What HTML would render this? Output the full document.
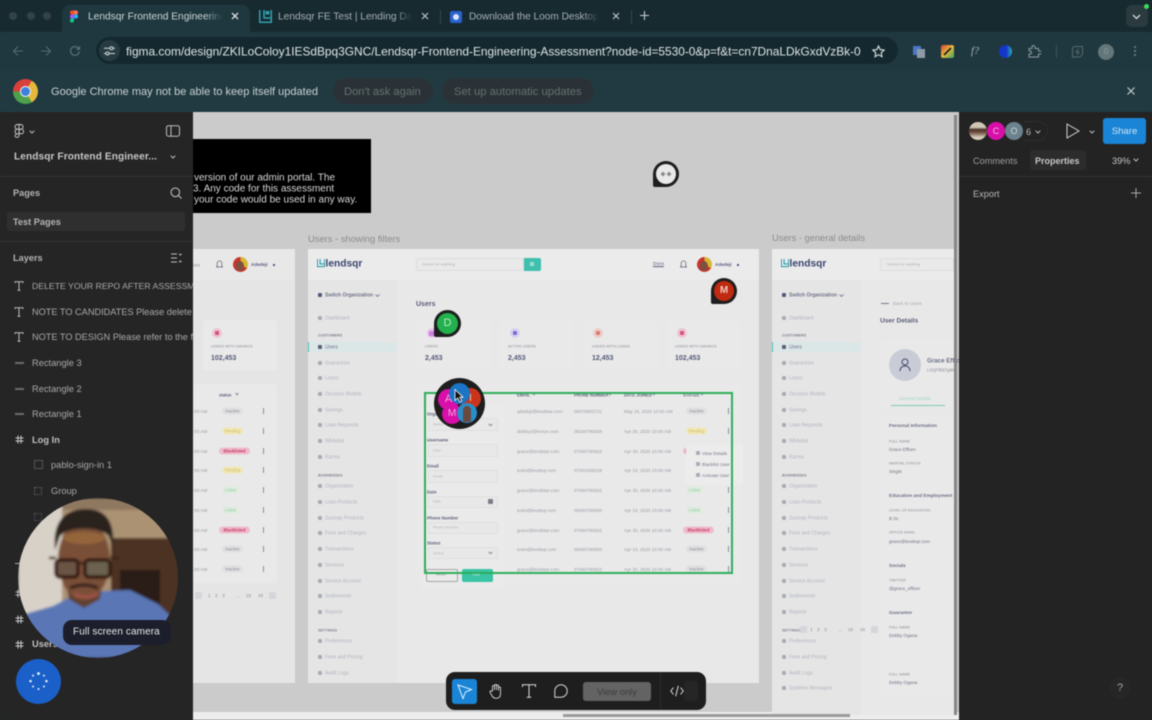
<!DOCTYPE html>
<html><head><meta charset="utf-8"><title>Lendsqr Frontend Engineering</title>
<style>
*{box-sizing:border-box}
html,body{margin:0;padding:0;width:1152px;height:720px;overflow:hidden;background:#1b2f35}
body{font-family:"Liberation Sans",sans-serif}
#r{position:absolute;left:0;top:0;width:1152px;height:720px;overflow:hidden;filter:blur(.5px)}
#r div,#r svg{position:absolute}
.t{white-space:nowrap;line-height:1;transform:translateY(calc(-50% + 1.6px))}
.f{background:#e5e5e5}
.m{background:#e8e8e8}
.s{font-size:5px;color:#b2b5bf;white-space:nowrap;line-height:1;transform:translateY(calc(-50% + 2px));left:17px}
.i{left:10px;width:4px;height:4px;background:#a9acb8;border-radius:1px;transform:translateY(-50%)}
.h{font-size:3.8px;color:#80838f;font-weight:bold;left:10px;white-space:nowrap;line-height:1;transform:translateY(calc(-50% + 1.5px))}
.c{background:#e9e9e9;border-radius:2px}
.lb{font-size:3.8px;color:#8a8d98;white-space:nowrap;line-height:1;transform:translateY(calc(-50% + 1.5px))}
.n{font-size:7px;font-weight:bold;color:#55597a;white-space:nowrap;line-height:1;transform:translateY(calc(-50% + 1.5px))}
.q{font-size:4.6px;color:#9a9da6;white-space:nowrap;line-height:1;transform:translateY(calc(-50% + 1.5px))}
.p{height:7px;border-radius:4px;font-size:4.2px;line-height:7px;text-align:center;transform:translateY(-50%)}
.ia{background:#e0e0e2;color:#8d8f96;width:21px}
.pe{background:#f0e7b8;color:#d0bb5c;width:21px}
.bl{background:#efbccb;color:#c63a68;width:31px;font-weight:bold}
.ac{background:#e0ebe0;color:#8fce9c;width:17px}
.k{width:1.4px;height:6px;background:#8a8c9a;transform:translateY(-50%)}
.in{background:#e8e8e8;border:.6px solid #dfdfdf;border-radius:1px;left:428px;width:70px}
.bold{color:#5c5f78;font-weight:bold}
.v{font-size:4.8px;color:#6c6f83;font-weight:bold;white-space:nowrap;line-height:1;transform:translateY(calc(-50% + 1.5px));left:889px}
.tri{width:0;height:0;border-left:2px solid transparent;border-right:2px solid transparent;border-top:3px solid #a0a2ac}
.fade{-webkit-mask-image:linear-gradient(90deg,#000 88%,transparent);mask-image:linear-gradient(90deg,#000 88%,transparent)}
.lt{font-size:9.1px;color:#a9a9a9;left:18px}
.av{border-radius:50%;background:conic-gradient(#d9b82f 0 120deg,#c9342f 120deg 360deg)}
.av2{border-radius:50%;background:#7d5040}
</style></head><body><div id="r">

<!-- chrome -->
<div style="left:0;top:0;width:1152px;height:32px;background:#172a30"></div>
<div style="left:0;top:32px;width:1152px;height:40px;background:#1f383f"></div>
<div style="left:0;top:71px;width:1152px;height:41px;background:#213a41"></div>
<div style="left:9px;top:12px;width:8px;height:8px;border-radius:50%;background:#334347"></div>
<div style="left:27px;top:12px;width:8px;height:8px;border-radius:50%;background:#334347"></div>
<div style="left:43px;top:12px;width:8px;height:8px;border-radius:50%;background:#334347"></div>
<div style="left:62px;top:5px;width:188px;height:28px;background:#1f383f;border-radius:8px 8px 0 0"></div>

<svg style="left:70px;top:10px" width="8" height="13" viewBox="0 0 8 12"><path d="M0 2a2 2 0 0 1 2-2h2v4H2a2 2 0 0 1-2-2z" fill="#f24e1e"/><path d="M4 0h2a2 2 0 0 1 0 4H4z" fill="#ff7262"/><path d="M0 6a2 2 0 0 1 2-2h2v4H2a2 2 0 0 1-2-2z" fill="#a259ff"/><circle cx="6" cy="6" r="2" fill="#1abcfe"/><path d="M0 10a2 2 0 0 1 2-2h2v2a2 2 0 0 1-4 0z" fill="#0acf83"/></svg>
<div class="t fade" style="left:88px;top:16px;width:134px;overflow:hidden;font-size:10.2px;color:#ccd5d6;line-height:12px">Lendsqr Frontend Engineering</div>
<svg style="left:231px;top:12px" width="8" height="8" viewBox="0 0 8 8"><path d="M1 1l6 6M7 1L1 7" stroke="#d8dfe0" stroke-width="1.3"/></svg>
<svg style="left:259px;top:10px" width="13" height="13" viewBox="0 0 13 13"><path d="M.7 0v12.3h11.6V0M5 0v8h7" fill="none" stroke="#2f9fab" stroke-width="1.6"/><rect x="6.5" y="1" width="4" height="3.5" fill="#2f9fab"/></svg>
<div class="t fade" style="left:278px;top:16px;width:134px;overflow:hidden;font-size:10.2px;color:#a5b1b3;line-height:12px">Lendsqr FE Test | Lending Dashboard</div>
<svg style="left:421px;top:12px" width="8" height="8" viewBox="0 0 8 8"><path d="M1 1l6 6M7 1L1 7" stroke="#c0c8c9" stroke-width="1.2"/></svg>
<div style="left:440px;top:10px;width:1px;height:14px;background:#33464b"></div>
<div style="left:450px;top:11px;width:12px;height:12px;background:#2a62d0;border-radius:2px"></div>
<div style="left:453px;top:14px;width:6px;height:6px;background:#d9e4f7;border-radius:50%"></div>
<div class="t fade" style="left:469px;top:16px;width:130px;overflow:hidden;font-size:10.1px;color:#a5b1b3;line-height:12px">Download the Loom Desktop</div>
<svg style="left:612px;top:12px" width="8" height="8" viewBox="0 0 8 8"><path d="M1 1l6 6M7 1L1 7" stroke="#c0c8c9" stroke-width="1.2"/></svg>
<div style="left:631px;top:10px;width:1px;height:14px;background:#33464b"></div>
<svg style="left:640px;top:11px" width="9" height="9" viewBox="0 0 9 9"><path d="M4.5 0v9M0 4.5h9" stroke="#c5cdce" stroke-width="1.1"/></svg>
<div style="left:1126px;top:5px;width:22px;height:22px;background:#2a3a3e;border-radius:6px"></div>
<svg style="left:1132px;top:14px" width="9" height="6" viewBox="0 0 9 6"><path d="M1 1l3.5 3.5L8 1" fill="none" stroke="#d5dcdd" stroke-width="1.3"/></svg>
<div style="left:1144px;top:4px;width:5px;height:5px;background:#3ddc5a;border-radius:50%"></div>

<svg style="left:12px;top:45px" width="12" height="12" viewBox="0 0 12 12"><path d="M11 6H1.5M6 1.5L1.5 6 6 10.5" fill="none" stroke="#51686d" stroke-width="1.1"/></svg>
<svg style="left:40px;top:45px" width="12" height="12" viewBox="0 0 12 12"><path d="M1 6h9.5M6 1.5L10.5 6 6 10.5" fill="none" stroke="#51686d" stroke-width="1.1"/></svg>
<svg style="left:69px;top:45px" width="12" height="12" viewBox="0 0 12 12"><path d="M10.3 6.5A4.4 4.4 0 1 1 9 2.8L10.5 4.2M10.5 1v3.2H7.3" fill="none" stroke="#5d7479" stroke-width="1.1"/></svg>
<div style="left:96px;top:37px;width:802px;height:27px;background:#14292f;border-radius:14px"></div>
<div style="left:99px;top:40px;width:21px;height:21px;background:#263c42;border-radius:50%"></div>
<svg style="left:104px;top:46px" width="11" height="10" viewBox="0 0 11 10"><path d="M0 2.2h6M9 2.2h2M0 7.5h2M5 7.5h6" stroke="#cdd6d7" stroke-width="1"/><circle cx="7.5" cy="2.2" r="1.5" fill="none" stroke="#cdd6d7"/><circle cx="3.5" cy="7.5" r="1.5" fill="none" stroke="#cdd6d7"/></svg>
<div class="t" style="left:126px;top:50px;font-size:11.9px;color:#dfe5e6;width:738px;overflow:hidden;line-height:14px">figma.com/design/ZKILoColoy1IESdBpq3GNC/Lendsqr-Frontend-Engineering-Assessment?node-id=5530-0&amp;p=f&amp;t=cn7DnaLDkGxdVzBk-0</div>
<svg style="left:872px;top:45px" width="13" height="13" viewBox="0 0 13 13"><path d="M6.5 1l1.7 3.6 3.9.5-2.9 2.7.8 3.9-3.5-2-3.5 2 .8-3.9L.9 5.1l3.9-.5z" fill="none" stroke="#dfe5e6" stroke-width="1.1"/></svg>
<div style="left:913px;top:46px;width:8px;height:9px;background:#4a78c4"></div><div style="left:917px;top:49px;width:8px;height:9px;background:#8e9aa8"></div>
<div style="left:941px;top:45px;width:13px;height:13px;border-radius:2px;background:linear-gradient(135deg,#d9443a,#e6b93a 50%,#3aa864)"></div>
<svg style="left:942px;top:46px" width="11" height="11"><path d="M2 9L9 2" stroke="#1a1a1a" stroke-width="1.6"/></svg>
<div class="t" style="left:971px;top:50px;font:italic 10.5px 'Liberation Serif',serif;color:#a9b3b5">f?</div>
<div style="left:999px;top:45px;width:13px;height:13px;border-radius:50%;background:linear-gradient(90deg,#1436c9 55%,#2fa7b8)"></div>
<svg style="left:1028px;top:45px" width="13" height="13" viewBox="0 0 13 13"><path d="M1 3.5h3V2a1.5 1.5 0 0 1 3 0v1.5h3.5V6H12a1.5 1.5 0 0 1 0 3h-1.500v3H1V9h1a1.500 1.500 0 0 0 0-3H1z" fill="none" stroke="#8c9a9c" stroke-width="1"/></svg>
<div style="left:1056px;top:45px;width:1px;height:13px;background:#3c5055"></div>
<svg style="left:1071px;top:45px" width="13" height="13" viewBox="0 0 13 13"><path d="M3 1.5h8.5V8a4 4 0 0 1-4 4H1.5V5.5a4 4 0 0 1 1.5-4zM7.5 3.5L5 7h3l-2 3" fill="none" stroke="#56696d" stroke-width="1"/></svg>
<div style="left:1098px;top:44px;width:16px;height:16px;border-radius:50%;background:#63767a;color:#8ea0a3;font-size:8px;line-height:16px;text-align:center">0</div>
<div style="left:1134px;top:46px;width:2px;height:2px;background:#76888b;border-radius:50%"></div><div style="left:1134px;top:50px;width:2px;height:2px;background:#76888b;border-radius:50%"></div><div style="left:1134px;top:54px;width:2px;height:2px;background:#76888b;border-radius:50%"></div>

<div style="left:13px;top:79px;width:25px;height:25px;border-radius:50%;background:conic-gradient(from 30deg,#e6b83a 0 120deg,#4fa04b 120deg 240deg,#d9403a 240deg 360deg)"></div>
<div style="left:20px;top:86px;width:11px;height:11px;border-radius:50%;background:#3f7fdc;border:1.5px solid #e8eef5"></div>
<div class="t" style="left:51px;top:90.500px;font-size:11.02px;color:#c9d2d3">Google Chrome may not be able to keep itself updated</div>
<div style="left:333px;top:78px;width:100px;height:26px;border-radius:13px;background:#2a3237"></div>
<div class="t" style="left:344px;top:90.500px;font-size:11.2px;color:#66716f">Don't ask again</div>
<div style="left:442px;top:78px;width:152px;height:26px;border-radius:13px;background:#2a3237"></div>
<div class="t" style="left:454px;top:90.500px;font-size:11.25px;color:#66716f">Set up automatic updates</div>
<svg style="left:1127px;top:87px" width="8" height="8" viewBox="0 0 8 8"><path d="M.5.5l7 7M7.5.5l-7 7" stroke="#c9d2d3" stroke-width="1.1"/></svg>

<!-- canvas -->
<div style="left:193px;top:112px;width:766px;height:608px;background:#cbcbcb"></div>
<div style="left:193px;top:712px;width:766px;height:8px;background:#ededed"></div>

<div style="left:0;top:0;width:1152px;height:720px;filter:blur(.25px)">
<!-- left frame -->
<div class="f" style="left:193px;top:249px;width:102px;height:434px"></div>
<div class="m" style="left:193px;top:249px;width:102px;height:31px"></div>
<div class="lb" style="left:193px;top:264px;font-size:4.5px">ocs</div>
<svg style="left:216px;top:260px" width="7" height="9" viewBox="0 0 7 9"><path d="M3.5.8A2.4 2.4 0 0 0 1.2 3.3V6L.4 7h6.2l-.8-1V3.3A2.4 2.4 0 0 0 3.5.8z" fill="none" stroke="#5a5d70" stroke-width=".7"/></svg>
<div class="av" style="left:233px;top:257px;width:15px;height:15px"></div><div class="av2" style="left:236px;top:261px;width:8px;height:10px"></div>
<div class="lb" style="left:251px;top:264px;font-size:4.6px;color:#5c5f80;font-weight:bold">Adedeji</div>
<div style="left:273px;top:264px;width:2px;height:1.5px;background:#55587a"></div>
<div class="c" style="left:203px;top:320px;width:74px;height:50px"></div>
<div style="left:212px;top:328px;width:10px;height:10px;border-radius:50%;background:#ebc6d2"></div><div style="left:215px;top:331px;width:4px;height:4px;background:#d9537e"></div>
<div class="lb" style="left:211px;top:346px">USERS WITH SAVINGS</div>
<div class="n" style="left:211px;top:357px">102,453</div>
<div class="c" style="left:193px;top:384px;width:84px;height:199px"></div>
<div class="lb bold" style="left:219px;top:394px;font-size:4.2px">status</div><div class="tri" style="left:235px;top:393px"></div>
<div class="q" style="left:193px;top:411px">:00 AM</div><div class="p ia" style="left:222px;top:411px">Inactive</div><div class="k" style="left:263px;top:411px"></div>
<div class="q" style="left:193px;top:431px">:00 AM</div><div class="p pe" style="left:222px;top:431px">Pending</div><div class="k" style="left:263px;top:431px"></div>
<div class="q" style="left:193px;top:451px">:00 AM</div><div class="p bl" style="left:219px;top:451px">Blacklisted</div><div class="k" style="left:263px;top:451px"></div>
<div class="q" style="left:193px;top:470px">:00 AM</div><div class="p pe" style="left:222px;top:470px">Pending</div><div class="k" style="left:263px;top:470px"></div>
<div class="q" style="left:193px;top:490px">:00 AM</div><div class="p ac" style="left:222px;top:490px">Active</div><div class="k" style="left:263px;top:490px"></div>
<div class="q" style="left:193px;top:510px">:00 AM</div><div class="p ac" style="left:222px;top:510px">Active</div><div class="k" style="left:263px;top:510px"></div>
<div class="q" style="left:193px;top:530px">:00 AM</div><div class="p bl" style="left:219px;top:530px">Blacklisted</div><div class="k" style="left:263px;top:530px"></div>
<div class="q" style="left:193px;top:549px">:00 AM</div><div class="p ia" style="left:222px;top:549px">Inactive</div><div class="k" style="left:263px;top:549px"></div>
<div class="q" style="left:193px;top:569px">:00 AM</div><div class="p ia" style="left:222px;top:569px">Inactive</div><div class="k" style="left:263px;top:569px"></div>
<div style="left:195px;top:592px;width:7px;height:7px;background:#d5d6da;border-radius:1px"></div>
<div class="lb" style="left:208px;top:595px;font-size:4.6px;letter-spacing:4.6px">123</div><div class="lb" style="left:236px;top:595px;font-size:4.6px">...</div><div class="lb" style="left:246px;top:595px;font-size:4.6px">15</div><div class="lb" style="left:258px;top:595px;font-size:4.6px">16</div>
<div style="left:269px;top:592px;width:7px;height:7px;background:#d5d6da;border-radius:1px"></div>

<div class="t" style="left:308px;top:237px;font-size:9.4px;color:#8c8c8c">Users - showing filters</div>
<div class="t" style="left:772px;top:237px;font-size:9.3px;color:#8c8c8c">Users - general details</div>

<!-- frame 2 -->
<div class="m" style="left:308px;top:249px;width:451px;height:434px"></div>
<div class="f" style="left:308px;top:280px;width:89px;height:403px"></div>
<div style="left:308px;top:249px;width:451px;height:31px;background:#ebebeb"></div>
<svg style="left:317px;top:258px" width="8" height="10" viewBox="0 0 13 13"><path d="M.7 0v12.3h11.6V0M5 0v8h7" fill="none" stroke="#2f9fab" stroke-width="1.800"/></svg>
<div class="t" style="left:325.500px;top:262.500px;font-size:10.2px;font-weight:bold;color:#3c4570">lendsqr</div>
<div style="left:416px;top:258px;width:108px;height:13px;background:#e9e9e9;border:.6px solid #dedede;border-radius:2px 0 0 2px"></div>
<div class="lb" style="left:422px;top:264px;color:#aeb0b8">Search for anything</div>
<div style="left:524px;top:258px;width:17px;height:13px;background:#3fc0ae;border-radius:0 2px 2px 0"></div>
<div style="left:530px;top:262px;width:4px;height:4px;border:.6px solid #d5f0ec;border-radius:50%"></div>
<div class="lb" style="left:653px;top:264px;font-size:4.8px;color:#5c6080;text-decoration:underline">Docs</div>
<svg style="left:680px;top:260px" width="7" height="9" viewBox="0 0 7 9"><path d="M3.5.8A2.4 2.4 0 0 0 1.2 3.3V6L.4 7h6.2l-.8-1V3.3A2.4 2.4 0 0 0 3.5.8z" fill="none" stroke="#5a5d70" stroke-width=".7"/></svg>
<div class="av" style="left:697px;top:257px;width:15px;height:15px"></div><div class="av2" style="left:700px;top:261px;width:8px;height:10px"></div>
<div class="lb" style="left:715px;top:264px;font-size:4.6px;color:#5c5f80;font-weight:bold">Adedeji</div>
<div style="left:737px;top:264px;width:2px;height:1.5px;background:#55587a"></div>

<!-- sidebar frame 2 -->
<div style="left:308px;top:0;width:89px;height:720px">
<div style="left:0;top:342px;width:89px;height:10px;background:#dbe7e6;border-left:1px solid #55bfb4"></div>
<div class="i" style="top:295px;background:#55587a"></div><div class="s" style="top:294px;color:#6f7288;font-weight:bold">Switch Organization</div>
<svg style="left:67px;top:294px" width="5" height="3" viewBox="0 0 5 3"><path d="M.5.500l2 2 2-2" fill="none" stroke="#55587a" stroke-width=".7"/></svg>
<div class="i" style="top:318px"></div><div class="s" style="top:317px">Dashboard</div>
<div class="h" style="top:335px">CUSTOMERS</div>
<div class="i" style="top:347px;background:#5c5f78"></div><div class="s" style="top:346px;color:#6c6f88">Users</div>
<div class="i" style="top:363px"></div><div class="s" style="top:362px">Guarantors</div>
<div class="i" style="top:378px"></div><div class="s" style="top:377px">Loans</div>
<div class="i" style="top:394px"></div><div class="s" style="top:393px">Decision Models</div>
<div class="i" style="top:410px"></div><div class="s" style="top:409px">Savings</div>
<div class="i" style="top:425px"></div><div class="s" style="top:424px">Loan Requests</div>
<div class="i" style="top:441px"></div><div class="s" style="top:440px">Whitelist</div>
<div class="i" style="top:457px"></div><div class="s" style="top:456px">Karma</div>
<div class="h" style="top:475px">BUSINESSES</div>
<div class="i" style="top:486px"></div><div class="s" style="top:485px">Organization</div>
<div class="i" style="top:502px"></div><div class="s" style="top:501px">Loan Products</div>
<div class="i" style="top:518px"></div><div class="s" style="top:517px">Savings Products</div>
<div class="i" style="top:533px"></div><div class="s" style="top:532px">Fees and Charges</div>
<div class="i" style="top:549px"></div><div class="s" style="top:548px">Transactions</div>
<div class="i" style="top:565px"></div><div class="s" style="top:564px">Services</div>
<div class="i" style="top:581px"></div><div class="s" style="top:580px">Service Account</div>
<div class="i" style="top:596px"></div><div class="s" style="top:595px">Settlements</div>
<div class="i" style="top:612px"></div><div class="s" style="top:611px">Reports</div>
<div class="h" style="top:630px">SETTINGS</div>
<div class="i" style="top:641px"></div><div class="s" style="top:640px">Preferences</div>
<div class="i" style="top:657px"></div><div class="s" style="top:656px">Fees and Pricing</div>
<div class="i" style="top:673px"></div><div class="s" style="top:672px">Audit Logs</div>
</div>

<!-- frame 2 main -->
<div class="t" style="left:416px;top:302.500px;font-size:7px;font-weight:bold;color:#5a5d7a">Users</div>
<div class="c" style="left:416px;top:320px;width:75px;height:50px"></div>
<div class="c" style="left:500px;top:320px;width:74px;height:50px"></div>
<div class="c" style="left:583px;top:320px;width:75px;height:50px"></div>
<div class="c" style="left:667px;top:320px;width:73px;height:50px"></div>
<div style="left:427px;top:328px;width:10px;height:10px;border-radius:50%;background:#e6c4ea"></div><div style="left:429px;top:331px;width:6px;height:5px;background:#d07fe0"></div>
<div style="left:510px;top:328px;width:10px;height:10px;border-radius:50%;background:#d5d2ee"></div><div style="left:513px;top:331px;width:4px;height:4px;background:#7a6bd6;border-radius:1px"></div>
<div style="left:593px;top:328px;width:10px;height:10px;border-radius:50%;background:#eccdcb"></div><div style="left:596px;top:331px;width:4px;height:4px;background:#dc7a70;border-radius:1px"></div>
<div style="left:677px;top:328px;width:10px;height:10px;border-radius:50%;background:#ebc6d2"></div><div style="left:680px;top:331px;width:4px;height:4px;background:#d9537e"></div>
<div class="lb" style="left:425px;top:346px">USERS</div><div class="n" style="left:425px;top:357px">2,453</div>
<div class="lb" style="left:508px;top:346px">ACTIVE USERS</div><div class="n" style="left:508px;top:357px">2,453</div>
<div class="lb" style="left:592px;top:346px">USERS WITH LOANS</div><div class="n" style="left:592px;top:357px">12,453</div>
<div class="lb" style="left:675px;top:346px">USERS WITH SAVINGS</div><div class="n" style="left:675px;top:357px">102,453</div>

<div class="c" style="left:416px;top:384px;width:325px;height:199px"></div>
<div class="lb bold" style="left:517px;top:394px;font-size:4.2px">EMAIL</div><div class="tri" style="left:532px;top:393px"></div>
<div class="lb bold" style="left:574px;top:394px;font-size:4.2px">PHONE NUMBER</div><div class="tri" style="left:608px;top:393px"></div>
<div class="lb bold" style="left:624px;top:394px;font-size:4.2px">DATE JOINED</div><div class="tri" style="left:652px;top:393px"></div>
<div class="lb bold" style="left:683px;top:394px;font-size:4.2px">STATUS</div><div class="tri" style="left:700px;top:393px"></div>
<div class="q" style="left:517px;top:411px">adedeji@lendstar.com</div><div class="q" style="left:574px;top:411px">08078903721</div><div class="q" style="left:624px;top:411px">May 15, 2020 10:00 AM</div><div class="p ia" style="left:686px;top:411px">Inactive</div><div class="k" style="left:728px;top:411px"></div>
<div class="q" style="left:517px;top:431px">debby2@irorun.com</div><div class="q" style="left:574px;top:431px">08160780928</div><div class="q" style="left:624px;top:431px">Apr 30, 2020 10:00 AM</div><div class="p pe" style="left:686px;top:431px">Pending</div><div class="k" style="left:728px;top:431px"></div>
<div class="q" style="left:517px;top:451px">grace@lendstar.com</div><div class="q" style="left:574px;top:451px">07060780922</div><div class="q" style="left:624px;top:451px">Apr 30, 2020 10:00 AM</div><div class="p bl" style="left:683px;top:451px;width:8px">B</div>
<div class="q" style="left:517px;top:470px">tosin@lendsqr.com</div><div class="q" style="left:574px;top:470px">07003309226</div><div class="q" style="left:624px;top:470px">Apr 10, 2020 10:00 AM</div>
<div class="q" style="left:517px;top:490px">grace@lendstar.com</div><div class="q" style="left:574px;top:490px">07060780922</div><div class="q" style="left:624px;top:490px">Apr 30, 2020 10:00 AM</div><div class="p ac" style="left:686px;top:490px">Active</div><div class="k" style="left:728px;top:490px"></div>
<div class="q" style="left:517px;top:510px">tosin@lendsqr.com</div><div class="q" style="left:574px;top:510px">08060780900</div><div class="q" style="left:624px;top:510px">Apr 10, 2020 10:00 AM</div><div class="p ac" style="left:686px;top:510px">Active</div><div class="k" style="left:728px;top:510px"></div>
<div class="q" style="left:517px;top:530px">grace@lendstar.com</div><div class="q" style="left:574px;top:530px">07060780922</div><div class="q" style="left:624px;top:530px">Apr 30, 2020 10:00 AM</div><div class="p bl" style="left:683px;top:530px">Blacklisted</div><div class="k" style="left:728px;top:530px"></div>
<div class="q" style="left:517px;top:549px">tosin@lendsqr.com</div><div class="q" style="left:574px;top:549px">08060780900</div><div class="q" style="left:624px;top:549px">Apr 10, 2020 10:00 AM</div><div class="p ia" style="left:686px;top:549px">Inactive</div><div class="k" style="left:728px;top:549px"></div>
<div class="q" style="left:517px;top:569px">grace@lendstar.com</div><div class="q" style="left:574px;top:569px">07060780922</div><div class="q" style="left:624px;top:569px">Apr 30, 2020 10:00 AM</div><div class="p ia" style="left:686px;top:569px">Inactive</div><div class="k" style="left:728px;top:569px"></div>

<!-- context menu -->
<div style="left:686px;top:445px;width:57px;height:39px;background:#ececec"></div>
<div class="q" style="left:702px;top:453px;color:#777a88">View Details</div><div class="i" style="left:696px;top:453px"></div>
<div class="q" style="left:702px;top:464px;color:#777a88">Blacklist User</div><div class="i" style="left:696px;top:464px"></div>
<div class="q" style="left:702px;top:475px;color:#777a88">Activate User</div><div class="i" style="left:696px;top:475px"></div>

<!-- filter card -->
<div style="left:421px;top:405px;width:84px;height:184px;background:#eaeaea"></div>
<div class="lb bold" style="left:427px;top:413px;font-size:4.4px">Organization</div>
<div class="in" style="top:418px;height:13px"></div><div class="lb" style="left:433px;top:424px;color:#b5b7bd">Select</div>
<div class="lb bold" style="left:427px;top:439px;font-size:4.4px">Username</div>
<div class="in" style="top:444px;height:13px"></div><div class="lb" style="left:433px;top:450px;color:#b5b7bd">User</div>
<div class="lb bold" style="left:427px;top:465px;font-size:4.4px">Email</div>
<div class="in" style="top:470px;height:13px"></div><div class="lb" style="left:433px;top:476px;color:#b5b7bd">Email</div>
<div class="lb bold" style="left:427px;top:491px;font-size:4.4px">Date</div>
<div class="in" style="top:496px;height:12px"></div><div class="lb" style="left:433px;top:501px;color:#b5b7bd">Date</div><div style="left:488px;top:499px;width:5px;height:5px;background:#7b7e8a;border-radius:1px"></div>
<div class="lb bold" style="left:427px;top:517px;font-size:4.4px">Phone Number</div>
<div class="in" style="top:522px;height:12px"></div><div class="lb" style="left:433px;top:527px;color:#b5b7bd">Phone Number</div>
<div class="lb bold" style="left:427px;top:542px;font-size:4.4px">Status</div>
<div class="in" style="top:547px;height:12px"></div><div class="lb" style="left:433px;top:553px;color:#b5b7bd">Select</div>
<svg style="left:488px;top:551px" width="5" height="4" viewBox="0 0 5 4"><path d="M.5.7l2 2 2-2" fill="none" stroke="#6f7280" stroke-width=".7"/></svg>
<svg style="left:488px;top:423px" width="5" height="4" viewBox="0 0 5 4"><path d="M.5.7l2 2 2-2" fill="none" stroke="#6f7280" stroke-width=".7"/></svg>
<div style="left:426px;top:569px;width:32px;height:13px;border:.7px solid #a5a5a5;border-radius:2px"></div><div class="lb" style="left:436px;top:574px">Reset</div>
<div style="left:462px;top:569px;width:31px;height:13px;background:#39c4a5;border-radius:2px"></div><div class="lb" style="left:472px;top:574px;color:#d3f3ea">Filter</div>

<div style="left:424px;top:392px;width:309px;height:182px;border:2px solid #2fae5b"></div>

<!-- frame 3 -->
<div class="m" style="left:772px;top:249px;width:182px;height:466px"></div>
<div class="f" style="left:772px;top:280px;width:89px;height:435px"></div>
<div style="left:772px;top:249px;width:182px;height:31px;background:#ebebeb"></div>
<svg style="left:781px;top:258px" width="8" height="10" viewBox="0 0 13 13"><path d="M.7 0v12.3h11.6V0M5 0v8h7" fill="none" stroke="#2f9fab" stroke-width="1.800"/></svg>
<div class="t" style="left:789.500px;top:262.500px;font-size:10.2px;font-weight:bold;color:#3c4570">lendsqr</div>
<div style="left:880px;top:258px;width:74px;height:13px;background:#e9e9e9;border:.6px solid #dedede;border-radius:2px 0 0 2px"></div>
<div class="lb" style="left:887px;top:264px;color:#aeb0b8">Search for anything</div>
<div style="left:772px;top:0;width:89px;height:720px">
<div style="left:0;top:342px;width:89px;height:10px;background:#dbe7e6;border-left:1px solid #55bfb4"></div>
<div class="i" style="top:295px;background:#55587a"></div><div class="s" style="top:294px;color:#6f7288;font-weight:bold">Switch Organization</div>
<svg style="left:67px;top:294px" width="5" height="3" viewBox="0 0 5 3"><path d="M.5.500l2 2 2-2" fill="none" stroke="#55587a" stroke-width=".7"/></svg>
<div class="i" style="top:318px"></div><div class="s" style="top:317px">Dashboard</div>
<div class="h" style="top:335px">CUSTOMERS</div>
<div class="i" style="top:347px;background:#5c5f78"></div><div class="s" style="top:346px;color:#6c6f88">Users</div>
<div class="i" style="top:363px"></div><div class="s" style="top:362px">Guarantors</div>
<div class="i" style="top:378px"></div><div class="s" style="top:377px">Loans</div>
<div class="i" style="top:394px"></div><div class="s" style="top:393px">Decision Models</div>
<div class="i" style="top:410px"></div><div class="s" style="top:409px">Savings</div>
<div class="i" style="top:425px"></div><div class="s" style="top:424px">Loan Requests</div>
<div class="i" style="top:441px"></div><div class="s" style="top:440px">Whitelist</div>
<div class="i" style="top:457px"></div><div class="s" style="top:456px">Karma</div>
<div class="h" style="top:475px">BUSINESSES</div>
<div class="i" style="top:486px"></div><div class="s" style="top:485px">Organization</div>
<div class="i" style="top:502px"></div><div class="s" style="top:501px">Loan Products</div>
<div class="i" style="top:518px"></div><div class="s" style="top:517px">Savings Products</div>
<div class="i" style="top:533px"></div><div class="s" style="top:532px">Fees and Charges</div>
<div class="i" style="top:549px"></div><div class="s" style="top:548px">Transactions</div>
<div class="i" style="top:565px"></div><div class="s" style="top:564px">Services</div>
<div class="i" style="top:581px"></div><div class="s" style="top:580px">Service Account</div>
<div class="i" style="top:596px"></div><div class="s" style="top:595px">Settlements</div>
<div class="i" style="top:612px"></div><div class="s" style="top:611px">Reports</div>
<div class="h" style="top:630px">SETTINGS</div>
<div class="i" style="top:641px"></div><div class="s" style="top:640px">Preferences</div>
<div class="i" style="top:657px"></div><div class="s" style="top:656px">Fees and Pricing</div>
<div class="i" style="top:673px"></div><div class="s" style="top:672px">Audit Logs</div>
<div class="i" style="top:688px"></div><div class="s" style="top:687px">Systems Messages</div>
</div>
<div style="left:800px;top:626px;width:7px;height:7px;background:#d5d6da"></div>
<div class="lb" style="left:810px;top:629px;font-size:4.6px;letter-spacing:4.6px">123</div><div class="lb" style="left:838px;top:629px;font-size:4.6px">...</div><div class="lb" style="left:848px;top:629px;font-size:4.6px">15</div><div class="lb" style="left:860px;top:629px;font-size:4.6px">16</div>
<div style="left:871px;top:626px;width:7px;height:7px;background:#d5d6da"></div>

<div class="q" style="left:893px;top:303px;color:#a6a8b4">Back to Users</div><div style="left:881px;top:303px;width:8px;height:.8px;background:#777a88"></div>
<div class="t" style="left:880px;top:320px;font-size:6.6px;font-weight:bold;color:#5a5d7a">User Details</div>
<div class="c" style="left:880px;top:340px;width:74px;height:66px"></div>
<div style="left:889px;top:349px;width:32px;height:32px;border-radius:50%;background:#c9ccd6"></div>
<svg style="left:899px;top:358px" width="12" height="14" viewBox="0 0 12 14"><circle cx="6" cy="4" r="3" fill="none" stroke="#44476a" stroke-width="1"/><path d="M1 13c0-3 2-5 5-5s5 2 5 5" fill="none" stroke="#44476a" stroke-width="1"/></svg>
<div class="t" style="left:927px;top:360px;font-size:6.2px;font-weight:bold;color:#6c6f88">Grace Effiom</div>
<div class="lb" style="left:927px;top:369px;font-size:4.4px">LSQFf587g90</div>
<div class="q" style="left:899px;top:398px;color:#9fd6c5">General Details</div>
<div style="left:891px;top:404.5px;width:54px;height:.8px;background:#7ccbb2"></div>
<div class="c" style="left:880px;top:416px;width:74px;height:280px"></div>
<div class="v" style="top:426px">Personal Information</div>
<div class="lb" style="left:889px;top:441px">FULL NAME</div><div class="q" style="left:889px;top:449px;color:#6f7288">Grace Effiom</div>
<div class="lb" style="left:889px;top:463px">MARITAL STATUS</div><div class="q" style="left:889px;top:471px;color:#6f7288">Single</div>
<div class="v" style="top:496px">Education and Employment</div>
<div class="lb" style="left:889px;top:510px">LEVEL OF EDUCATION</div><div class="q" style="left:889px;top:518px;color:#6f7288">B.Sc</div>
<div class="lb" style="left:889px;top:532px">OFFICE EMAIL</div><div class="q" style="left:889px;top:541px;color:#6f7288">grace@lendsqr.com</div>
<div class="v" style="top:566px">Socials</div>
<div class="lb" style="left:889px;top:580px">TWITTER</div><div class="q" style="left:889px;top:588px;color:#6f7288">@grace_effiom</div>
<div class="v" style="top:613px">Guarantor</div>
<div class="lb" style="left:889px;top:627px">FULL NAME</div><div class="q" style="left:889px;top:635px;color:#6f7288">Debby Ogana</div>
<div class="lb" style="left:889px;top:674px">FULL NAME</div><div class="q" style="left:889px;top:682px;color:#6f7288">Debby Ogana</div>
</div>

<!-- black note -->
<div style="left:193px;top:139px;width:178px;height:74px;background:#000"></div>
<div style="left:193px;top:139px;width:178px;height:74px;overflow:hidden">
<div class="t" style="left:1px;top:38px;font-size:10px;color:#d6d6d6">version of our admin portal. The</div>
<div class="t" style="left:0;top:49px;font-size:10px;color:#d6d6d6">3. Any code for this assessment</div>
<div class="t" style="left:1px;top:60px;font-size:10px;color:#d6d6d6">your code would be used in any way.</div>
</div>

<!-- scrollbars -->
<div style="left:954px;top:115px;width:3px;height:600px;background:#858585"></div>
<div style="left:563px;top:714px;width:287px;height:3px;background:#9a9a9a"></div>

<!-- cursor chips -->
<div style="left:653px;top:161px;width:26px;height:26px;background:#1e1e1e;border-radius:50% 50% 50% 2px"></div>
<div style="left:656px;top:164px;width:20px;height:20px;background:#e9e9e9;border-radius:50%"></div>
<svg style="left:660px;top:171px" width="12" height="6" viewBox="0 0 12 6"><path d="M3 .5L.5 3 3 5.5 5.500 3zM9 .5L6.500 3 9 5.500 11.500 3z" fill="#8a8a8a"/></svg>
<div style="left:434px;top:310px;width:27px;height:27px;background:#1e1e1e;border-radius:50% 50% 50% 2px"></div>
<div style="left:437px;top:313px;width:21px;height:21px;background:#22b14c;border-radius:50%;color:#bde8c8;font-size:11px;line-height:21px;text-align:center">D</div>
<div style="left:711px;top:278px;width:26px;height:26px;background:#1e1e1e;border-radius:50% 50% 50% 2px"></div>
<div style="left:714px;top:281px;width:20px;height:20px;background:#bf2a10;border-radius:50%;color:#f0c6bd;font-size:10px;font-weight:bold;line-height:20px;text-align:center">M</div>
<div style="left:434px;top:378px;width:51px;height:51px;background:#1e1e1e;border-radius:50%"></div>
<div style="left:438px;top:389px;width:21px;height:21px;background:#d80fa8;border-radius:50%;color:#f2a8df;font-size:11px;line-height:21px;text-align:center">A</div>
<div style="left:442px;top:404px;width:20px;height:20px;background:#d80fa8;border-radius:50%;color:#f2a8df;font-size:10px;line-height:20px;text-align:center">M</div>
<div style="left:460px;top:388px;width:21px;height:21px;background:#c9351a;border-radius:50%;color:#f0c6bd;font-size:10px;line-height:21px;text-align:center">I</div>
<div style="left:449px;top:383px;width:21px;height:21px;background:#1b75c4;border-radius:50%"></div>
<div style="left:457px;top:403px;width:20px;height:20px;background:#2a8ec9;border-radius:50%"></div>
<div style="left:463px;top:406px;width:8px;height:16px;background:#6a4a40;border-radius:4px 4px 2px 2px"></div>
<svg style="left:454px;top:389px" width="10" height="14" viewBox="0 0 10 14"><path d="M1 .5v11l2.800-2.500L5.800 13l2-1-2-3.800H9z" fill="#111" stroke="#fff" stroke-width=".8"/></svg>

<!-- bottom toolbar -->
<div style="left:446px;top:672px;width:260px;height:38px;background:#1e1e1e;border-radius:9px"></div>
<div style="left:452px;top:679px;width:25px;height:25px;background:#1a85d6;border-radius:3px"></div>
<svg style="left:457px;top:684px" width="16" height="16" viewBox="0 0 16 16"><path d="M1 1l13.500 4.500-6 2.500-2.500 6.500z" fill="none" stroke="#e4f1fb" stroke-width="1"/></svg>
<svg style="left:489px;top:683px" width="15" height="16" viewBox="0 0 15 16"><path d="M3.500 8V3.500a1 1 0 0 1 2 0V7V2.500a1 1 0 0 1 2 0V7V3a1 1 0 0 1 2 0v4.500V5a1 1 0 0 1 2 0v6c0 3-2 4.300-4.500 4.300S3.500 14 2.500 12L1 9.200c-.5-1 .8-1.900 1.600-1z" fill="none" stroke="#d9d9d9" stroke-width=".9"/></svg>
<svg style="left:522px;top:684px" width="14" height="14" viewBox="0 0 14 14"><path d="M.5 3V.8h13V3M7 .8v12.400M4.800 13.200h4.400" fill="none" stroke="#d9d9d9" stroke-width="1"/></svg>
<svg style="left:554px;top:684px" width="14" height="14" viewBox="0 0 14 14"><path d="M7 .8a6.200 6.200 0 0 1 0 12.400H.8V7A6.200 6.200 0 0 1 7 .8z" fill="none" stroke="#d9d9d9" stroke-width="1"/></svg>
<div style="left:583px;top:682px;width:68px;height:19px;background:#636363;border-radius:3px"></div>
<div class="t" style="left:597px;top:690px;font-size:9.4px;color:#3c3c3c">View only</div>
<div style="left:660px;top:672px;width:1px;height:38px;background:#2c2c2c"></div>
<div style="left:684px;top:681px;width:14px;height:20px;background:#262626;border-radius:3px"></div>
<svg style="left:670px;top:685px" width="14" height="12" viewBox="0 0 14 12"><path d="M3.500 2.500L.8 6l2.700 3.500M10.500 2.500L13.200 6l-2.700 3.500M8.300.8L5.700 11.200" fill="none" stroke="#d9d9d9" stroke-width="1"/></svg>

<!-- right panel -->
<div style="left:959px;top:112px;width:193px;height:608px;background:#232323"></div>
<div class="t" style="left:973px;top:159.500px;font-size:9.2px;color:#9d9d9d">Comments</div>
<div style="left:1030px;top:150px;width:56px;height:20px;background:#2c2c2c;border-radius:3px"></div>
<div class="t" style="left:1035px;top:159.500px;font-size:9px;font-weight:bold;color:#c8c8c8">Properties</div>
<div class="t" style="left:1112px;top:159.500px;font-size:9.200px;color:#c4c4c4">39%</div>
<svg style="left:1133px;top:158px" width="6" height="4" viewBox="0 0 6 4"><path d="M.7.7L3 3 5.300.7" fill="none" stroke="#c4c4c4"/></svg>
<div style="left:959px;top:176px;width:193px;height:1px;background:#333"></div>
<div class="t" style="left:973px;top:192.500px;font-size:9.200px;color:#b8b8b8">Export</div>
<svg style="left:1131px;top:188px" width="10" height="10" viewBox="0 0 10 10"><path d="M5 0v10M0 5h10" stroke="#a8a8a8"/></svg>
<div style="left:1024px;top:121px;width:24px;height:20px;border:1px solid #2e2e2e;border-left:0;border-radius:0 10px 10px 0"></div>
<div style="left:969px;top:122px;width:18px;height:18px;border-radius:50%;background:linear-gradient(180deg,#cfc6b4 30%,#4a2f26 42%,#7a5a48 60%,#d5ccbc 85%)"></div>
<div style="left:987px;top:122px;width:18px;height:18px;border-radius:50%;background:#d80fa8;color:#f2b6e2;font-size:9px;line-height:18px;text-align:center">C</div>
<div style="left:1005px;top:122px;width:18px;height:18px;border-radius:50%;background:#6c828c;color:#c9d5da;font-size:9px;line-height:18px;text-align:center">O</div>
<div class="t" style="left:1026px;top:130.500px;font-size:9px;color:#bdbdbd">6</div>
<svg style="left:1035px;top:130px" width="6" height="4" viewBox="0 0 6 4"><path d="M.7.700L3 3 5.300.700" fill="none" stroke="#bdbdbd"/></svg>
<svg style="left:1066px;top:123px" width="14" height="16" viewBox="0 0 14 16"><path d="M1 1l12 7-12 7z" fill="none" stroke="#d2d2d2" stroke-width="1"/></svg>
<svg style="left:1089px;top:130px" width="6" height="4" viewBox="0 0 6 4"><path d="M.7.700L3 3 5.300.700" fill="none" stroke="#bdbdbd"/></svg>
<div style="left:1103px;top:118px;width:43px;height:26px;background:#1a85d6;border-radius:3px;color:#cfe5f5;font-size:9.600px;line-height:27px;text-align:center">Share</div>
<div style="left:1109px;top:677px;width:22px;height:22px;border-radius:50%;background:#262626;color:#a5a5a5;font-size:11px;line-height:22px;text-align:center">?</div>

<!-- left panel -->
<div style="left:0;top:112px;width:193px;height:608px;background:#252525"></div>
<svg style="left:14px;top:124px" width="10" height="15" viewBox="0 0 10 15"><path d="M1 2.800A2.300 2.300 0 0 1 3.300.5H5v4.700H3.300A2.300 2.300 0 0 1 1 2.800zM5 .5h1.700a2.300 2.300 0 0 1 0 4.700H5zM1 7.500a2.300 2.300 0 0 1 2.300-2.300H5v4.700H3.300A2.300 2.300 0 0 1 1 7.500zM5 7.500a2.300 2.300 0 1 1 4.600 0 2.300 2.300 0 0 1-4.600 0zM1 12.200a2.300 2.300 0 0 1 2.300-2.300H5v2.300a2.300 2.300 0 0 1-4 0z" fill="none" stroke="#cfcfcf" stroke-width=".9"/></svg>
<svg style="left:29px;top:130px" width="6" height="4" viewBox="0 0 6 4"><path d="M.7.700L3 3 5.300.700" fill="none" stroke="#bdbdbd"/></svg>
<svg style="left:166px;top:125px" width="14" height="12" viewBox="0 0 14 12"><rect x=".5" y=".7" width="13" height="10.500" rx="2" fill="none" stroke="#bdbdbd"/><path d="M5 .7v10.500" stroke="#bdbdbd"/></svg>
<div class="t" style="left:14px;top:156px;font-size:10.100px;font-weight:bold;color:#c6c6c6;letter-spacing:.1px">Lendsqr Frontend Engineer...</div>
<svg style="left:170px;top:155px" width="6" height="4" viewBox="0 0 6 4"><path d="M.7.700L3 3 5.300.700" fill="none" stroke="#bdbdbd"/></svg>
<div style="left:0;top:176px;width:193px;height:1px;background:#333"></div>
<div class="t" style="left:13px;top:192px;font-size:9.200px;font-weight:bold;color:#b4b4b4">Pages</div>
<svg style="left:170px;top:187px" width="12" height="12" viewBox="0 0 12 12"><circle cx="5.300" cy="5.300" r="4.300" fill="none" stroke="#c8c8c8"/><path d="M8.500 8.500L11.500 11.500" stroke="#c8c8c8"/></svg>
<div style="left:7px;top:212px;width:178px;height:19px;background:#2f2f2f;border-radius:3px"></div>
<div class="t" style="left:13px;top:220.500px;font-size:9.200px;font-weight:bold;color:#b4b4b4">Test Pages</div>
<div style="left:0;top:241px;width:193px;height:1px;background:#333"></div>
<div class="t" style="left:13px;top:257px;font-size:9.200px;font-weight:bold;color:#b4b4b4">Layers</div>
<svg style="left:171px;top:253px" width="11" height="10" viewBox="0 0 11 10"><path d="M0 1h6M0 5h6M0 9h6M8 .8l1.300 1.300L10.600.800M8 9.200l1.300-1.300 1.300 1.300" fill="none" stroke="#bdbdbd"/></svg>

<div style="left:14px;top:280px;width:179px;height:400px;overflow:hidden">
<div class="t lt" style="top:5px;font-size:8.7px">DELETE YOUR REPO AFTER ASSESSMENT</div>
<div class="t lt" style="top:31px;font-size:9.2px">NOTE TO CANDIDATES Please delete</div>
<div class="t lt" style="top:56px;font-size:9.2px">NOTE TO DESIGN Please refer to the file for more</div>
<div class="t lt" style="top:82px;font-size:9.300px">Rectangle 3</div>
<div class="t lt" style="top:108px;font-size:9.300px">Rectangle 2</div>
<div class="t lt" style="top:133px;font-size:9.300px">Rectangle 1</div>
<div class="t lt" style="top:159px;font-size:9.300px;font-weight:bold;color:#c0c0c0">Log In</div>
<div class="t lt" style="left:37px;top:184px;font-size:9.300px">pablo-sign-in 1</div>
<div class="t lt" style="left:37px;top:210px;font-size:9.300px">Group</div>
<div class="t lt" style="top:363px;font-size:9.300px;font-weight:bold;color:#c0c0c0">Users</div>
</div>
<svg style="left:14px;top:281px" width="10" height="10" viewBox="0 0 10 10"><path d="M1 2V.7h8V2M5 .7v8.600M3.500 9.300h3" fill="none" stroke="#bcbcbc"/></svg>
<svg style="left:14px;top:307px" width="10" height="10" viewBox="0 0 10 10"><path d="M1 2V.7h8V2M5 .7v8.600M3.500 9.300h3" fill="none" stroke="#bcbcbc"/></svg>
<svg style="left:14px;top:332px" width="10" height="10" viewBox="0 0 10 10"><path d="M1 2V.7h8V2M5 .7v8.600M3.500 9.300h3" fill="none" stroke="#bcbcbc"/></svg>
<div style="left:15px;top:362px;width:9px;height:2px;background:#6a6a6a"></div>
<div style="left:15px;top:388px;width:9px;height:2px;background:#6a6a6a"></div>
<div style="left:15px;top:413px;width:9px;height:2px;background:#6a6a6a"></div>
<svg style="left:15px;top:435px" width="9" height="9" viewBox="0 0 9 9"><path d="M3 .5v8M6 .5v8M.5 3h8M.5 6h8" stroke="#c8c8c8" stroke-width="1"/></svg>
<div style="left:34px;top:460px;width:9px;height:9px;border:1px solid #555"></div>
<div style="left:34px;top:487px;width:8px;height:8px;border:1px dotted #666"></div>
<div style="left:34px;top:513px;width:8px;height:8px;border:1px dotted #555"></div>
<div style="left:15px;top:563px;width:8px;height:8px;border-top:1px solid #a9a9a9"></div>
<svg style="left:15px;top:589px" width="9" height="9" viewBox="0 0 9 9"><path d="M3 .5v8M6 .5v8M.5 3h8M.5 6h8" stroke="#b8b8b8" stroke-width="1"/></svg>
<svg style="left:15px;top:615px" width="9" height="9" viewBox="0 0 9 9"><path d="M3 .5v8M6 .5v8M.5 3h8M.5 6h8" stroke="#c8c8c8" stroke-width="1"/></svg>
<svg style="left:15px;top:640px" width="9" height="9" viewBox="0 0 9 9"><path d="M3 .5v8M6 .5v8M.5 3h8M.5 6h8" stroke="#c8c8c8" stroke-width="1"/></svg>

<!-- webcam -->
<svg style="left:18px;top:498px" width="160" height="160" viewBox="0 0 160 160">
<defs><clipPath id="cp"><circle cx="80" cy="80" r="80"/></clipPath><filter id="bl" x="-10%" y="-10%" width="120%" height="120%"><feGaussianBlur stdDeviation="1.300"/></filter></defs>
<g clip-path="url(#cp)"><g filter="url(#bl)">
<rect width="160" height="160" fill="#ab9273"/>
<rect x="0" y="0" width="44" height="125" fill="#d8d1c7"/>
<rect x="44" y="0" width="116" height="12" fill="#8f7860"/>
<rect x="93" y="40" width="70" height="90" fill="#4b3024"/>
<rect x="102" y="72" width="40" height="45" fill="#2a1d18"/>
<path d="M0 118L35 108 62 94 112 92 140 106 160 125V160H0z" fill="#5a76b5"/>
<path d="M48 86h36l-2 15-16 9-15-9z" fill="#5f3f2f"/>
<ellipse cx="66" cy="62" rx="26" ry="40" fill="#7a4f37"/>
<ellipse cx="66" cy="40" rx="21" ry="6" fill="#94653a"/>
<path d="M37 52C34 20 50 11 68 11c18 0 29 10 27 38L91 38C82 28 50 28 42 38z" fill="#2a211e"/>
<rect x="38" y="62" width="22" height="17" rx="4" fill="#6b5544" stroke="#33190f" stroke-width="3.500"/>
<rect x="67" y="62" width="25" height="17" rx="4" fill="#6c6250" stroke="#33190f" stroke-width="3.500"/>
<path d="M31 60h7M92 60h9M60 65h7" stroke="#3a2417" stroke-width="2.500"/>
<path d="M52 90q14-6 28 0" stroke="#38201a" stroke-width="3.500" fill="none"/>
<path d="M56 96q12 6 24 0" stroke="#9c5344" stroke-width="3.500" fill="none"/>
</g></g></svg>
<div style="left:63px;top:620px;width:108px;height:25px;background:#1c1f2b;border-radius:9px"></div>
<div class="t" style="left:73px;top:631px;font-size:10px;color:#e6e8ec;letter-spacing:.1px">Full screen camera</div>

<!-- blue button -->
<div style="left:16px;top:659px;width:45px;height:45px;border-radius:50%;background:#1a60c8"></div>
<svg style="left:28px;top:671px" width="21" height="21" viewBox="0 0 25 25" fill="#e4eefc"><circle cx="12.500" cy="3" r="1.700"/><circle cx="19" cy="5.500" r="1.200"/><circle cx="22" cy="12" r="1.500"/><circle cx="19" cy="18.500" r="1.200"/><circle cx="12.500" cy="21.500" r="1.200"/><circle cx="6" cy="18.500" r="1.200"/><circle cx="3" cy="12" r="1.500"/><circle cx="6" cy="5.500" r="1.200"/></svg>
</div></body></html>
